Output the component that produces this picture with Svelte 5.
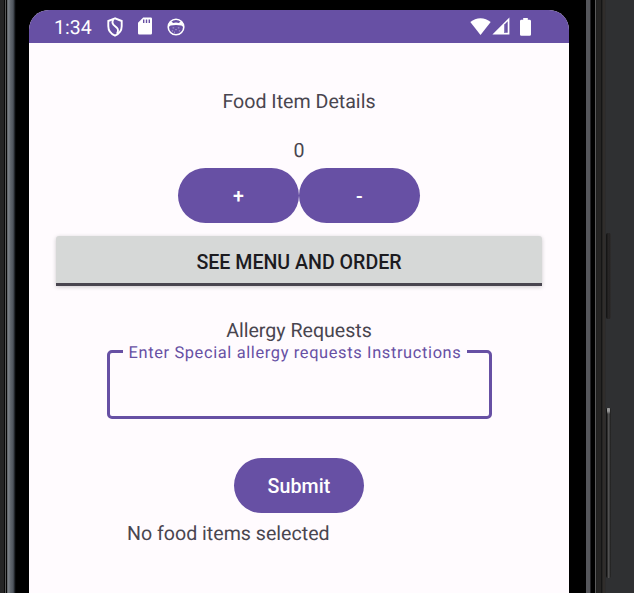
<script>
  let quantity = $state(0);
  let request = $state('');
  let message = $state('No food items selected');

  function submit() {
    message = quantity > 0 ? `${quantity} food items selected` : 'No food items selected';
  }
</script>

<div class="device">
  <div class="rail left"></div>
  <main class="phone">
    <div class="screen">
      <header class="status">
        <span class="time">1:34</span>
        <svg class="shield" width="16" height="20" viewBox="0 0 16 20" fill="none" stroke="#fff" stroke-width="1.9">
          <path d="M8 1.3 1.3 4v5.3c0 4.1 2.7 7.6 6.7 9.3 4-1.7 6.7-5.2 6.7-9.3V4z" />
          <path d="M6.4 2.2C5.2 4.2 5.2 6.4 6.6 7.9l3.2 2.8c1.8 1.8 1.4 3.9.2 6.1" />
        </svg>
        <svg class="sd" width="14" height="18" viewBox="0 0 14 18">
          <path fill="#fff" fill-rule="evenodd" d="M5.2.5H12.8Q14 .5 14 1.7V16.3Q14 17.5 12.8 17.5H1.2Q0 17.5 0 16.3V5.7zM5 2.5v3.5h1.4v-3.5zM7.8 2.5v3.5h1.4v-3.5zM10.6 2.5v3.5h1.4v-3.5z" />
        </svg>
        <svg class="face" width="18" height="18" viewBox="0 0 18 18">
          <circle cx="9" cy="9" r="7.8" fill="none" stroke="#fff" stroke-width="1.6" />
          <path fill="#fff" d="M2.6 4 4 3.2 6.2 5Q9 4.2 11.8 5L14 3.2 15.4 4 16.4 9 14.4 7.6Q9 6.6 3.6 7.6L1.6 9z" />
          <path d="M5.6 9.9h1.6m3.6 0h1.6M8.3 11.7h1.4M4.8 12.9h1.4m5.6 0h1.4M7 14.2h1" stroke="#b3a5d6" stroke-width="1" />
        </svg>
        <span class="grow"></span>
        <svg class="wifi" width="21" height="17" viewBox="0 0 21 17">
          <path fill="#fff" d="M10.5 17 .3 4.1Q4.8.3 10.5.3t10.2 3.8z" />
        </svg>
        <svg class="cell" width="18" height="18" viewBox="0 0 18 18">
          <path fill="#fff" fill-rule="evenodd" d="M.4 17.4 17.4.4v17zM12 7.9v7.8h3.7V4.2z" />
          <path fill="#8f7fbd" d="M12 7.9l1.2-1.2v9H12z" />
        </svg>
        <svg class="battery" width="11" height="18" viewBox="0 0 11 18">
          <path fill="#fff" d="M3.2 0h4.6v1.8h1.7Q11 1.8 11 3.2v13.2Q11 17.8 9.6 17.8H1.4Q0 17.8 0 16.4V3.2Q0 1.8 1.4 1.8h1.8z" />
        </svg>
      </header>

      <div class="content">
        <div class="title">Food Item Details</div>
        <div class="count">{quantity}</div>
        <div class="stepper">
          <button class="pill" onclick={() => quantity++}>+</button>
          <button class="pill" onclick={() => (quantity = Math.max(0, quantity - 1))}>-</button>
        </div>
        <button class="menu">SEE MENU AND ORDER</button>
        <div class="allergy" id="allergy">Allergy Requests</div>
        <fieldset>
          <legend>Enter Special allergy requests Instructions</legend>
          <input bind:value={request} aria-labelledby="allergy" />
        </fieldset>
        <button class="pill submit" onclick={submit}>Submit</button>
        <div class="message">{message}</div>
      </div>
    </div>
  </main>
  <div class="rail right"></div>
  <aside>
    <div class="key power"></div>
    <div class="key volume"></div>
  </aside>
</div>

<style>
  :global(body) { margin: 0; background: #2f3032; }
  .device {
    display: flex;
    width: 634px;
    height: 593px;
    overflow: hidden;
    background: #000;
    font-family: Roboto, sans-serif;
    font-size: 19.6px;
    color: #49454f;
    text-rendering: geometricPrecision;
  }
  .rail { flex: none; }
  .left {
    width: 29px;
    background: linear-gradient(90deg, #252525 0 4px, #090909 4px 5px, #555 5px 6px, #050505 6px 7px, #62666a 7px 8px, #777d83 8px 9px, #656b72 10px, #50565e 13px, #363b43 14px, #101214 15px, #000 16px);
  }
  .phone { width: 540px; padding-top: 10px; flex: none; box-sizing: border-box; }
  .screen { height: 583px; background: #fffbfe; border-radius: 20px 20px 0 0; overflow: hidden; }
  .right {
    width: 37px;
    background: linear-gradient(90deg, #000 0 17px, #55565b 17px 21px, #242427 21px 22px, #000 22px 26px, #5b5b5b 26px 27px, #202020 27px 28px, #252423 28px 32px, #151515 32px 33px, #252423 33px 34px, #302d2b 34px 36px, #2c2c2d 36px);
  }
  aside { flex: 1; background: #2f3032; display: flex; flex-direction: column; }
  .key { width: 5px; border-radius: 2px; }
  .power { height: 86px; margin-top: 233px; background: linear-gradient(90deg, #151515 0 1px, #292727 2px, #242222 4px, #343333); }
  .volume { height: 170px; margin-top: 89px; background: linear-gradient(#999 0, #999 3px, transparent 6px) 1px 0 / 3px 100% no-repeat, linear-gradient(90deg, #131313 0 1px, #4b4a4a 2px, #555 3px, #292929 4px, #222); }

  .status { display: flex; align-items: flex-start; height: 33px; background: #6750a4; color: #fff; }
  .status svg { display: block; flex: none; }
  .time { margin: 6px 0 0 25px; width: 53px; line-height: 24px; font-size: 19.5px; }
  .shield { margin-top: 7px; }
  .sd { margin: 7px 0 0 15px; }
  .face { margin: 8px 0 0 15px; }
  .grow { flex: 1; }
  .wifi { margin-top: 8px; }
  .cell { margin: 7px 0 0 1px; }
  .battery { margin: 8px 38px 0 10px; }

  .content { display: flex; flex-direction: column; align-items: center; }
  .title, .count, .allergy, .message { line-height: 24px; letter-spacing: 0; white-space: nowrap; }
  .title { margin-top: 47px; }
  .count { margin-top: 25px; }
  .stepper { display: flex; margin-top: 5px; }
  button { border: 0; padding: 0; font-family: inherit; font-weight: 500; font-size: 19.6px; cursor: pointer; }
  .pill { width: 121px; height: 55px; border-radius: 28px; background: #6750a4; color: #fff; letter-spacing: 0.1px; padding-top: 2px; }
  .menu {
    width: 486px;
    height: 50px;
    margin-top: 13px;
    padding-top: 5px;
    border-bottom: 3px solid #49454f;
    border-radius: 3px 3px 0 0;
    background: #d6d8d7;
    color: #1c1b1f;
    box-shadow: 0 1px 4px rgba(0, 0, 0, 0.2);
  }
  .allergy { margin-top: 33px; }
  fieldset {
    box-sizing: border-box;
    width: 385px;
    height: 76px;
    margin: 0;
    padding: 0;
    min-width: 0;
    border: 3px solid #6750a4;
    border-radius: 5px;
  }
  legend { margin-left: 13px; padding: 5px 6px 0; line-height: 12px; font-size: 16.4px; letter-spacing: 0.64px; color: #6750a4; white-space: nowrap; }
  input { display: block; width: 100%; height: 54px; box-sizing: border-box; padding: 0 19px; border: 0; outline: 0; background: transparent; font: inherit; color: inherit; }
  .submit { width: 130px; margin-top: 39px; padding-top: 2px; }
  .message { align-self: flex-start; margin: 9px 0 0 98px; }
</style>
